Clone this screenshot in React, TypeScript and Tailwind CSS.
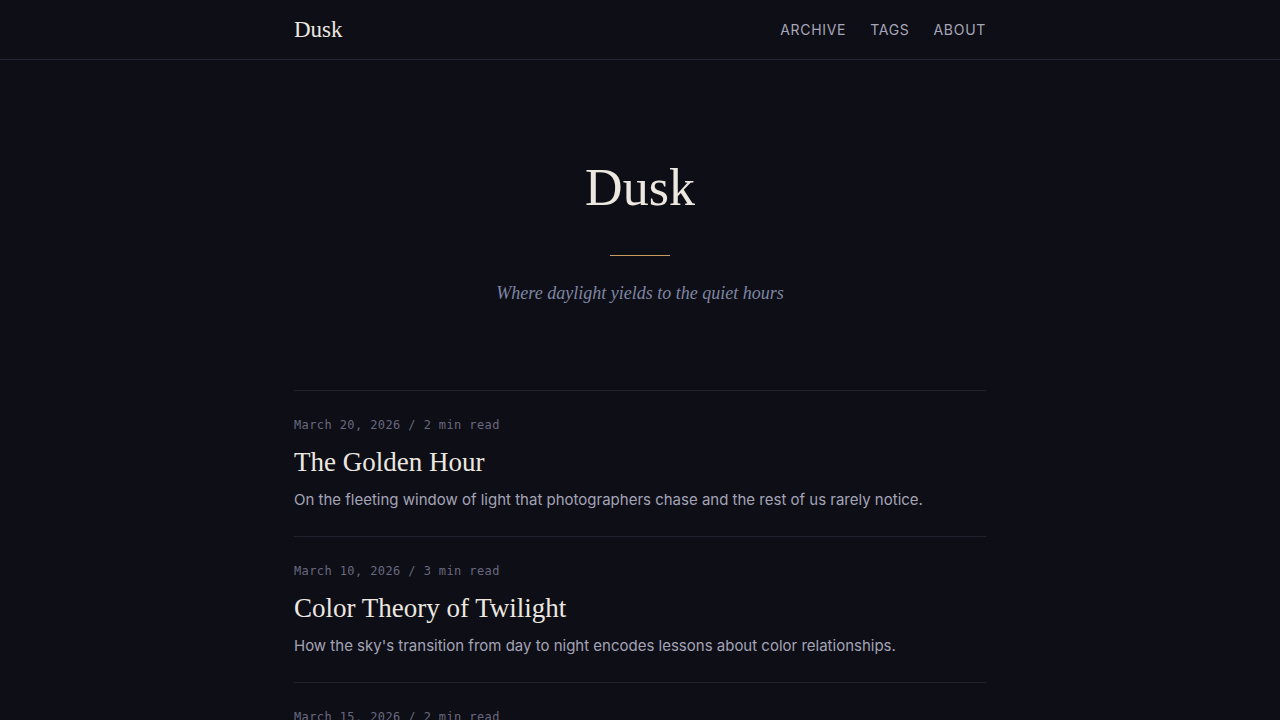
import React from 'react';

const posts = [
  {
    date: 'March 20, 2026',
    read: '2 min read',
    title: 'The Golden Hour',
    excerpt: 'On the fleeting window of light that photographers chase and the rest of us rarely notice.',
  },
  {
    date: 'March 10, 2026',
    read: '3 min read',
    title: 'Color Theory of Twilight',
    excerpt: "How the sky's transition from day to night encodes lessons about color relationships.",
  },
  {
    date: 'March 15, 2026',
    read: '2 min read',
    title: 'Notes on Stillness',
    excerpt: 'What the last hour of the day teaches about slowing down.',
  },
];

const serif = "font-['Liberation_Serif','DejaVu_Serif',serif]";

const App: React.FC = () => {
  return (
    <div className="min-h-screen bg-[#0e0e16] font-['Inter','Noto_Sans',sans-serif]">
      <header className="border-b border-[#262636]">
        <div className="max-w-[692px] mx-auto h-[59px] flex items-center justify-between">
          <a className={`${serif} text-[23px] text-[#ece8e0] leading-none`}>Dusk</a>
          <nav className="flex items-center gap-6 text-[14px] tracking-[0.05em] uppercase text-[#a6a6b8]">
            <a>Archive</a>
            <a>Tags</a>
            <a>About</a>
          </nav>
        </div>
      </header>

      <main className="max-w-[692px] mx-auto">
        {/* hero */}
        <section className="pt-[96px] pb-[85px] flex flex-col items-center">
          <h1 className={`${serif} text-[52px] leading-[64px] text-[#ece8e0]`}>Dusk</h1>
          <div className="w-[60px] h-px bg-[#c89b5c] mt-[35px]"></div>
          <p className={`${serif} italic text-[18px] text-[#7e86a2] mt-[25px] leading-[24px]`}>
            Where daylight yields to the quiet hours
          </p>
        </section>

        {/* posts */}
        <div className="border-t border-[#22222f]">
          {posts.map(p => (
            <article key={p.title} className="border-b border-[#22222f] pt-[26px] pb-[24px]">
              <div className="font-['DejaVu_Sans_Mono','Liberation_Mono',monospace] text-[12px] tracking-[0.4px] text-[#68687e] leading-[16px]">
                {p.date} / {p.read}
              </div>
              <h2 className={`${serif} text-[27px] text-[#ece8e0] leading-[34px] mt-[12px]`}>{p.title}</h2>
              <p className="text-[15px] text-[#a4a4b6] leading-[24px] mt-[9px]">{p.excerpt}</p>
            </article>
          ))}
        </div>
      </main>
    </div>
  );
};

export default App;
